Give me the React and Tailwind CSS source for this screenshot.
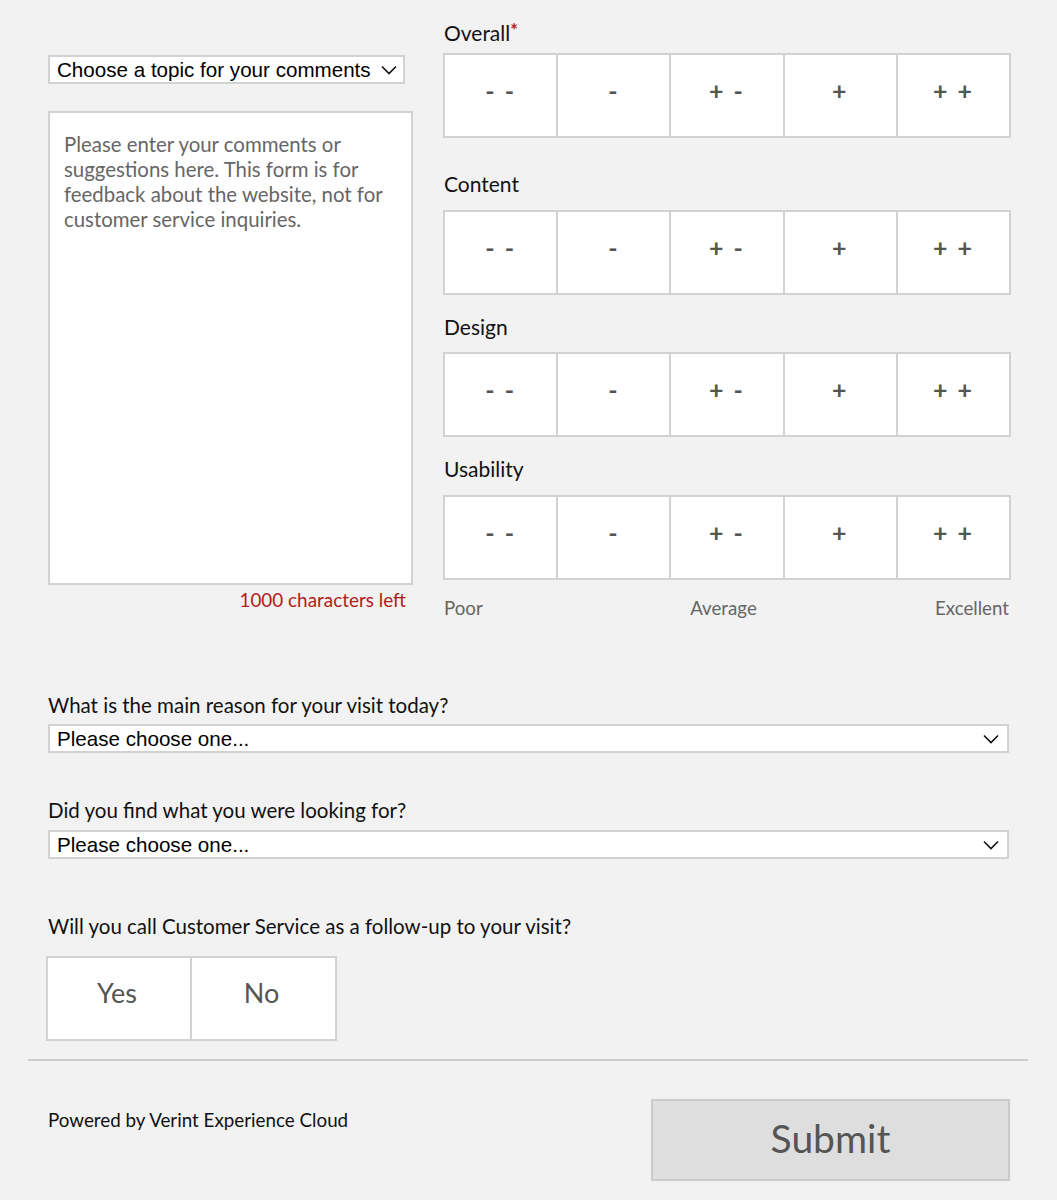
import React from 'react';

const lato = { fontFamily: 'Lato, "Open Sans", sans-serif' };
const arial = { fontFamily: '"Liberation Sans", Arial, sans-serif' };

const Chevron = () => (
  <svg width="16" height="10" viewBox="0 0 16 10" fill="none">
    <path d="M1 1.5 L8 8.5 L15 1.5" stroke="#111" strokeWidth="1.6" />
  </svg>
);

const Select = ({ text, className }) => (
  <div
    className={`flex items-center justify-between h-[29px] bg-white border-2 border-[#d2d2d2] pl-[7px] pt-[1px] text-[20.6px] text-black ${className}`}
    style={arial}
  >
    <span>{text}</span>
    <Chevron />
  </div>
);

const Rating = ({ label, required, labelClass }) => (
  <div>
    <div className={`h-6 leading-6 text-[21px] text-[#111] pl-[1px] ${labelClass}`}>
      {label}
      {required && <span className="relative -top-[4px] text-[#b5262a] text-[18px] font-bold">*</span>}
    </div>
    <div className="flex h-[85px] border-2 border-[#d2d2d2] divide-x-2 divide-[#d2d2d2] bg-white">
      {['- -', '-', '+ -', '+', '+ +'].map((s) => (
        <div key={s} className="flex-1 flex items-center justify-center text-[25px] font-bold text-[#555] whitespace-pre tracking-[2px] pb-[10px]">
          {s}
        </div>
      ))}
    </div>
  </div>
);

export default function App() {
  return (
    <div className="min-h-[1200px] bg-[#f2f2f2] pt-[21px]" style={lato}>
      <div className="flex pl-[48px]">
        {/* left: topic + comments */}
        <div className="w-[365px] pt-[34px]">
          <Select text="Choose a topic for your comments" className="w-[357px] pr-[6px]" />
          <div className="mt-[27px] h-[474px] bg-white border-2 border-[#d2d2d2] px-[14px] pt-[19px] text-[20.4px] leading-[25px] text-[#666]">
            Please enter your comments or suggestions here. This form is for feedback about the website, not for customer service inquiries.
          </div>
          <div className="text-right pr-[7px] mt-[4px] text-[18.9px] leading-[22px] text-[#b0201a]">
            1000 characters left
          </div>
        </div>

        {/* right: ratings */}
        <div className="w-[568px] ml-[30px]">
          <Rating label="Overall" required labelClass="mb-[8px]" />
          <div className="mt-[34px]">
            <Rating label="Content" labelClass="mb-[14px]" />
          </div>
          <div className="mt-[20px]">
            <Rating label="Design" labelClass="mb-[13px]" />
          </div>
          <div className="mt-[20px]">
            <Rating label="Usability" labelClass="mb-[14px]" />
          </div>
          <div className="flex mt-[17px] text-[18.7px] leading-[22px] text-[#666] pl-[1px] pr-[2px]">
            <span className="flex-1">Poor</span>
            <span className="flex-1 text-center pr-[6px]">Average</span>
            <span className="flex-1 text-right">Excellent</span>
          </div>
        </div>
      </div>

      {/* questions */}
      <div className="pl-[48px] mt-[74px]">
        <div className="text-[20.5px] leading-6 text-[#111]">What is the main reason for your visit today?</div>
        <Select text="Please choose one..." className="w-[961px] mt-[7px] pr-[8px]" />

        <div className="mt-[45px] text-[20.5px] leading-6 text-[#111]">Did you find what you were looking for?</div>
        <Select text="Please choose one..." className="w-[961px] mt-[8px] pr-[8px]" />

        <div className="mt-[55px] text-[20.5px] leading-6 text-[#111]">Will you call Customer Service as a follow-up to your visit?</div>
        <div className="flex w-[291px] h-[85px] -ml-[2px] mt-[18px] bg-white border-2 border-[#d2d2d2] divide-x-2 divide-[#d2d2d2]">
          <div className="w-[144px] flex items-center justify-center text-[27px] text-[#555] pb-[10px] pr-[4px]">Yes</div>
          <div className="flex-1 flex items-center justify-center text-[27px] text-[#555] pb-[10px] pr-[4px]">No</div>
        </div>
      </div>

      <div className="mx-[28px] w-[1000px] mt-[18px] border-t-2 border-[#cdcdcd]" />

      <div className="flex items-start justify-between pl-[48px] pr-[47px] pt-[38px]">
        <div className="text-[18.8px] leading-6 text-[#111] mt-[9px]">Powered by Verint Experience Cloud</div>
        <button className="w-[359px] h-[82px] bg-[#dedede] border-2 border-[#cbcbcb] text-[39px] text-[#555] pb-[4px]" style={lato}>
          Submit
        </button>
      </div>
    </div>
  );
}
